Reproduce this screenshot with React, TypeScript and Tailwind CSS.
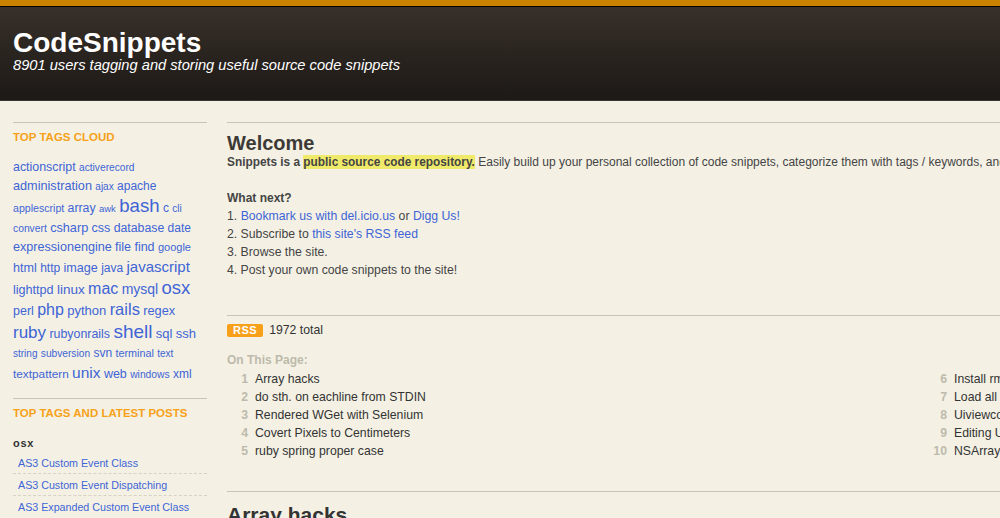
const tags: [string, number][] = [
  ["actionscript", 12.4], ["activerecord", 10.2], ["administration", 12.7], ["ajax", 10], ["apache", 12],
  ["applescript", 10.6], ["array", 12.3], ["awk", 9.5], ["bash", 18.6], ["c", 12], ["cli", 10],
  ["convert", 10.3], ["csharp", 12.7], ["css", 12.5], ["database", 12.3], ["date", 12],
  ["expressionengine", 12.6], ["file", 12.5], ["find", 12.5], ["google", 11],
  ["html", 12.6], ["http", 12], ["image", 12.6], ["java", 12], ["javascript", 15],
  ["lighttpd", 12.6], ["linux", 13.5], ["mac", 16], ["mysql", 14], ["osx", 18.5],
  ["perl", 12.5], ["php", 16], ["python", 13], ["rails", 16.5], ["regex", 12.8],
  ["ruby", 17], ["rubyonrails", 12.4], ["shell", 19], ["sql", 13], ["ssh", 13],
  ["string", 10], ["subversion", 10.2], ["svn", 12], ["terminal", 10.8], ["text", 10],
  ["textpattern", 11.8], ["unix", 15.5], ["web", 12.5], ["windows", 10.3], ["xml", 12],
];

const latest = ["AS3 Custom Event Class", "AS3 Custom Event Dispatching", "AS3 Expanded Custom Event Class"];

const pageLinks = [
  ["Array hacks", "do sth. on eachline from STDIN", "Rendered WGet with Selenium", "Covert Pixels to Centimeters", "ruby spring proper case"],
  ["Install rmagick", "Load all models", "Uiviewcontroller", "Editing URLs", "NSArray"],
];

export default function App() {
  return (
    <div className="h-[518px] w-[1000px] overflow-hidden bg-[#f4f1e4] font-['Liberation_Sans',Arial,sans-serif] text-[12px] text-[#444]">
      <div className="h-[7px] border-b border-black bg-[#c98200]" />
      <header className="h-[94px] border-b border-[#3a3632] bg-gradient-to-b from-[#38302a] to-[#1d1916] pl-[13px] pt-[22px] text-white">
        <h1 className="text-[28px] font-bold leading-[28px]">CodeSnippets</h1>
        <p className="text-[14.67px] italic leading-[16px]">8901 users tagging and storing useful source code snippets</p>
      </header>

      <div className="flex pl-[13px] pt-[21px]">
        <aside className="w-[194px] shrink-0">
          <div className="border-t border-[#c8c5b8] pt-[7px]">
            <h2 className="text-[11.5px] font-bold uppercase leading-[14px] text-[#f7a11a]">Top Tags Cloud</h2>
            <div className="mt-[14px] leading-[19.2px] text-[#4064d6]">
              {tags.map(([name, size]) => (
                <span key={name}>
                  <a href="#" style={{ fontSize: size }}>{name}</a>{" "}
                </span>
              ))}
            </div>
          </div>

          <div className="mt-[14px] border-t border-[#c8c5b8] pt-[7px]">
            <h2 className="text-[11.5px] font-bold uppercase leading-[14px] text-[#f7a11a]">Top Tags and Latest Posts</h2>
            <h3 className="mt-[16px] text-[11px] font-bold leading-[14px] tracking-[0.7px] text-[#333]">osx</h3>
            <ul className="mt-[2px]">
              {latest.map((title) => (
                <li key={title} className="border-b border-dashed border-[#d6d3c6] pb-[3px] pl-[5px] pt-[4px] text-[10.7px] leading-[14px] text-[#4064d6] last:border-b-0">
                  <a href="#">{title}</a>
                </li>
              ))}
            </ul>
          </div>
        </aside>

        <main className="ml-5 w-[1398px] shrink-0">
          <section className="border-t border-[#c8c5b8] pt-[11px]">
            <h2 className="text-[20px] font-bold leading-[19px] text-[#3d3a36]">Welcome</h2>
            <p className="whitespace-nowrap leading-[18px]">
              <strong className="text-[11.85px]">Snippets is a <span className="bg-[#f0ea6a]">public source code repository.</span></strong>{" "}
              Easily build up your personal collection of code snippets, categorize them with tags / keywords, and share them with the world
            </p>
            <p className="mt-[18px] font-bold leading-[18px]">What next?</p>
            <div className="text-[12.25px]">
              <p className="leading-[18px]">1. <a href="#" className="text-[#4064d6]">Bookmark us with del.icio.us</a> or <a href="#" className="text-[#4064d6]">Digg Us!</a></p>
              <p className="leading-[18px]">2. Subscribe to <a href="#" className="text-[#4064d6]">this site's RSS feed</a></p>
              <p className="leading-[18px]">3. Browse the site.</p>
              <p className="leading-[18px]">4. Post your own code snippets to the site!</p>
            </div>
          </section>

          <section className="mt-[36px] border-t border-[#c8c5b8] pt-[6px]">
            <div className="flex items-center gap-[6px] leading-[16px]">
              <span className="rounded-[2px] bg-[#f9a01b] px-[6px] text-[11px] font-bold leading-[13px] tracking-[0.5px] text-white">RSS</span>
              <span className="text-[12.25px] text-[#333]">1972 total</span>
            </div>
            <p className="mt-[13px] font-bold leading-[18px] text-[#bdbaac]">On This Page:</p>
            <div className="mt-px grid grid-cols-2 text-[12.25px]">
              {pageLinks.map((col, c) => (
                <ol key={c}>
                  {col.map((title, i) => (
                    <li key={title} className="flex leading-[18px]">
                      <span className="w-[21px] shrink-0 text-right font-bold text-[#bdbaac]">{c * 5 + i + 1}</span>
                      <a href="#" className="ml-[7px] text-[#333]">{title}</a>
                    </li>
                  ))}
                </ol>
              ))}
            </div>
          </section>

          <section className="mt-[31px] border-t border-[#c8c5b8] pt-[11px]">
            <h2 className="text-[21px] font-bold leading-[24px] text-[#333]">Array hacks</h2>
          </section>
        </main>
      </div>
    </div>
  );
}
